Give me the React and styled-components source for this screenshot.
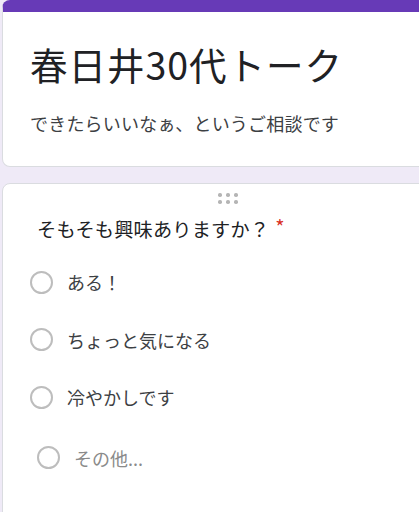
import React from "react";
import styled, { createGlobalStyle } from "styled-components";

const Global = createGlobalStyle`
  html, body { margin: 0; padding: 0; }
  body {
    background: #efeaf7;
    font-family: "Noto Sans CJK JP", "Noto Sans", sans-serif;
    overflow: hidden;
  }
`;

const Page = styled.div`
  width: 419px;
  height: 512px;
  overflow: hidden;
  padding-left: 2px;
  box-sizing: border-box;
  display: flex;
  flex-direction: column;
  gap: 16px;
`;

const Card = styled.section`
  width: 450px;
  background: #fff;
  border: 1px solid #dadce0;
  border-top: ${(p) => (p.$accent ? "12px solid #673ab7" : "1px solid #dadce0")};
  border-radius: 8px;
  box-sizing: border-box;
  flex-shrink: 0;
`;

const Header = styled.div`
  padding: 30px 0 30px 27px;
  display: flex;
  flex-direction: column;
  gap: 24px;
`;

const Title = styled.h1`
  margin: 0;
  font-size: 37.5px;
  line-height: 44px;
  font-weight: 400;
  color: #202124;
  letter-spacing: 1px;
`;

const Subtitle = styled.p`
  margin: 0;
  font-size: 18px;
  line-height: 26px;
  color: #3c4043;
  letter-spacing: 0.2px;
`;

const Question = styled.div`
  padding: 9px 0 60px 0;
  display: flex;
  flex-direction: column;
`;

const Handle = styled.div`
  align-self: flex-start;
  margin-left: 215px;
  display: grid;
  grid-template-columns: repeat(3, 3.5px);
  grid-template-rows: repeat(2, 3.5px);
  gap: 3.5px 4.5px;
  height: 10px;
`;

const Dot = styled.span`
  width: 3.5px;
  height: 3.5px;
  border-radius: 50%;
  background: #b5b5b5;
`;

const QTitle = styled.div`
  margin-top: 12px;
  padding-left: 34px;
  font-size: 19.2px;
  line-height: 28px;
  color: #202124;
  letter-spacing: 0.2px;
  display: flex;
  align-items: flex-start;
`;

const Req = styled.span`
  color: #d93025;
  font-size: 20px;
  line-height: 24px;
  margin-left: 6px;
`;

const Options = styled.div`
  margin-top: 19px;
  padding-left: 27px;
  display: flex;
  flex-direction: column;
  gap: 17.5px;
`;

const Option = styled.label`
  display: flex;
  align-items: center;
  gap: 14px;
  height: 40px;
  padding-left: ${(p) => (p.$other ? "7px" : "0")};
  margin-top: ${(p) => (p.$other ? "3px" : "0")};
`;

const Radio = styled.span`
  width: 23px;
  height: 23px;
  border: 2px solid #bdbdbd;
  border-radius: 50%;
  box-sizing: border-box;
  flex-shrink: 0;
`;

const OptText = styled.span`
  font-size: 18px;
  line-height: 26px;
  color: ${(p) => (p.$other ? "#8a8a8a" : "#3c4043")};
`;

const options = ["ある！", "ちょっと気になる", "冷やかしです"];

export default function App() {
  return (
    <>
      <Global />
      <Page>
        <Card $accent>
          <Header>
            <Title>春日井30代トーク</Title>
            <Subtitle>できたらいいなぁ、というご相談です</Subtitle>
          </Header>
        </Card>
        <Card>
          <Question>
            <Handle>
              {Array.from({ length: 6 }).map((_, i) => (
                <Dot key={i} />
              ))}
            </Handle>
            <QTitle>
              そもそも興味ありますか？<Req>*</Req>
            </QTitle>
            <Options>
              {options.map((o) => (
                <Option key={o}>
                  <Radio />
                  <OptText>{o}</OptText>
                </Option>
              ))}
              <Option $other>
                <Radio />
                <OptText $other>その他...</OptText>
              </Option>
            </Options>
          </Question>
        </Card>
      </Page>
    </>
  );
}
